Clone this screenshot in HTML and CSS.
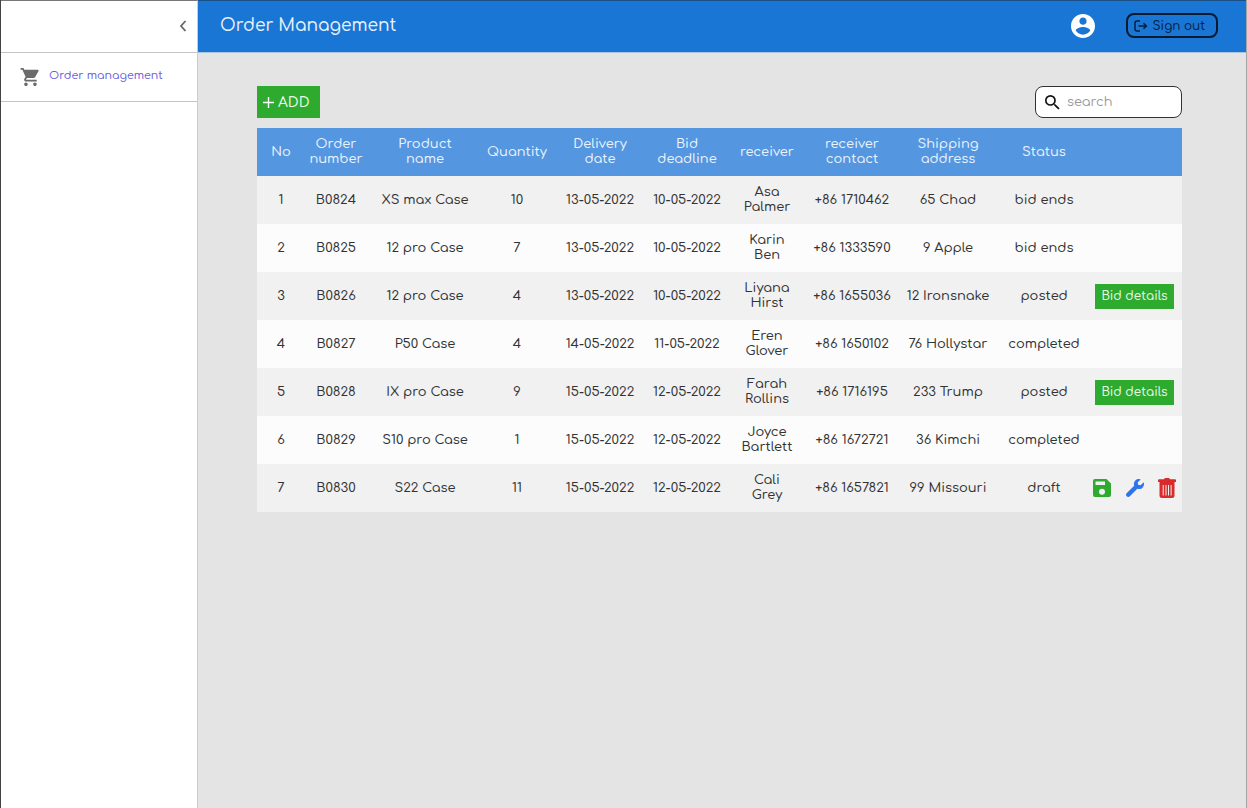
FILE: index.html
```html
<!DOCTYPE html>
<html lang="en">
<head>
<meta charset="utf-8">
<meta name="viewport" content="width=device-width, initial-scale=1">
<title>Order Management</title>
<link rel="stylesheet" href="styles.css">
</head>
<body>
<div class="app">
  <aside class="sidebar">
    <div class="sidebar-top">
      <button class="icon-button" type="button" aria-label="Collapse sidebar">
        <svg class="chevron" viewBox="0 0 8 12"><path d="M6.500 1 2 6l4.500 5" fill="none" stroke="#666" stroke-width="1.800"/></svg>
      </button>
    </div>
    <nav>
      <a class="nav-item" href="#">
        <svg class="cart" viewBox="1 2 21 20"><path fill="#6b6b6b" d="M7 18c-1.100 0-1.990.9-1.990 2S5.900 22 7 22s2-.9 2-2-.9-2-2-2zM1 2v2h2l3.600 7.590-1.350 2.450c-.16.28-.25.61-.25.96 0 1.100.9 2 2 2h12v-2H7.420c-.14 0-.25-.11-.25-.25l.03-.12.9-1.630h7.450c.75 0 1.410-.41 1.750-1.030l3.580-6.490A1 1 0 0 0 20 4H5.210l-.94-2H1zm16 16c-1.100 0-1.990.9-1.990 2s.89 2 1.990 2 2-.9 2-2-.9-2-2-2z"/></svg>
        <span>Order management</span>
      </a>
    </nav>
  </aside>
  <div class="page">
    <header class="topbar">
      <h1>Order Management</h1>
      <div class="account">
        <button class="icon-button" type="button" aria-label="Account">
          <svg class="avatar" viewBox="2 2 20 20"><path fill="#fff" d="M12 2C6.480 2 2 6.480 2 12s4.480 10 10 10 10-4.480 10-10S17.520 2 12 2zm0 3c1.660 0 3 1.340 3 3s-1.340 3-3 3-3-1.340-3-3 1.340-3 3-3zm0 14.200c-2.500 0-4.710-1.280-6-3.220.03-1.990 4-3.080 6-3.080 1.990 0 5.970 1.090 6 3.080-1.290 1.940-3.500 3.220-6 3.220z"/></svg>
        </button>
        <button class="sign-out" type="button">
          <svg class="exit" viewBox="0 0 14 12"><path d="M6 1H3Q1 1 1 3v6q0 2 2 2h3M4.500 6H12M9.500 3.200 12.400 6 9.500 8.800" fill="none" stroke="#08203c" stroke-width="1.500"/></svg>
          <span>Sign out</span>
        </button>
      </div>
    </header>
    <main class="content">
      <div class="toolbar">
        <button class="add" type="button"><svg class="plus" viewBox="0 0 11 11"><path d="M5.500 0v11M0 5.500h11" stroke="#fff" stroke-width="1.400"/></svg>ADD</button>
        <label class="search">
          <svg class="lens" viewBox="3 3 18 18"><path fill="#111" d="M15.500 14h-.79l-.28-.27A6.470 6.470 0 0 0 16 9.500 6.500 6.500 0 1 0 9.500 16c1.610 0 3.090-.59 4.230-1.570l.27.28v.79l5 4.990L20.490 19l-4.990-5zm-6 0C7.010 14 5 11.990 5 9.500S7.010 5 9.500 5 14 7.010 14 9.500 11.990 14 9.500 14z"/></svg>
          <input type="search" placeholder="search" aria-label="Search orders">
        </label>
      </div>
      <table class="orders">
        <colgroup>
          <col class="c-no"><col class="c-order"><col class="c-product"><col class="c-qty"><col class="c-delivery"><col class="c-deadline"><col class="c-receiver"><col class="c-contact"><col class="c-address"><col class="c-status"><col class="c-actions">
        </colgroup>
        <thead>
          <tr><th>No</th><th>Order<br>number</th><th>Product<br>name</th><th>Quantity</th><th>Delivery<br>date</th><th>Bid<br>deadline</th><th>receiver</th><th>receiver<br>contact</th><th>Shipping<br>address</th><th>Status</th><th aria-label="Actions"></th></tr>
        </thead>
        <tbody>
          <tr><td>1</td><td>B0824</td><td>XS max Case</td><td>10</td><td>13-05-2022</td><td>10-05-2022</td><td>Asa<br>Palmer</td><td>+86 1710462</td><td>65 Chad</td><td>bid ends</td><td></td></tr>
          <tr><td>2</td><td>B0825</td><td>12 pro Case</td><td>7</td><td>13-05-2022</td><td>10-05-2022</td><td>Karin<br>Ben</td><td>+86 1333590</td><td>9 Apple</td><td>bid ends</td><td></td></tr>
          <tr><td>3</td><td>B0826</td><td>12 pro Case</td><td>4</td><td>13-05-2022</td><td>10-05-2022</td><td>Liyana<br>Hirst</td><td>+86 1655036</td><td>12 Ironsnake</td><td>posted</td><td><button class="details" type="button">Bid details</button></td></tr>
          <tr><td>4</td><td>B0827</td><td>P50 Case</td><td>4</td><td>14-05-2022</td><td>11-05-2022</td><td>Eren<br>Glover</td><td>+86 1650102</td><td>76 Hollystar</td><td>completed</td><td></td></tr>
          <tr><td>5</td><td>B0828</td><td>IX pro Case</td><td>9</td><td>15-05-2022</td><td>12-05-2022</td><td>Farah<br>Rollins</td><td>+86 1716195</td><td>233 Trump</td><td>posted</td><td><button class="details" type="button">Bid details</button></td></tr>
          <tr><td>6</td><td>B0829</td><td>S10 pro Case</td><td>1</td><td>15-05-2022</td><td>12-05-2022</td><td>Joyce<br>Bartlett</td><td>+86 1672721</td><td>36 Kimchi</td><td>completed</td><td></td></tr>
          <tr><td>7</td><td>B0830</td><td>S22 Case</td><td>11</td><td>15-05-2022</td><td>12-05-2022</td><td>Cali<br>Grey</td><td>+86 1657821</td><td>99 Missouri</td><td>draft</td><td>
            <div class="actions">
              <button class="icon-button" type="button" aria-label="Save">
                <svg class="action" viewBox="0 0 18 18"><path fill="#2eab2e" fill-rule="evenodd" d="M2 0h11.500L18 4.500V16a2 2 0 0 1-2 2H2a2 2 0 0 1-2-2V2a2 2 0 0 1 2-2zm.5 2.500V6h9.500V2.500zM9 9.700a3 3 0 1 0 0 6 3 3 0 0 0 0-6z"/></svg>
              </button>
              <button class="icon-button" type="button" aria-label="Edit">
                <svg class="action" viewBox="0 0 512 512"><path fill="#2f74ee" d="M507.730 109.100c-2.240-9.030-13.540-12.090-20.120-5.510l-74.360 74.360-67.880-11.310-11.310-67.880 74.360-74.360c6.620-6.620 3.430-17.900-5.660-20.160-47.380-11.740-99.550.91-136.580 37.930-39.640 39.640-50.550 97.100-34.050 147.200L18.740 402.760c-24.990 24.990-24.990 65.510 0 90.500 24.990 24.990 65.510 24.990 90.500 0l213.210-213.210c50.120 16.710 107.470 5.680 147.370-34.220 37.070-37.070 49.700-89.320 37.910-136.730z"/></svg>
              </button>
              <button class="icon-button" type="button" aria-label="Delete">
                <svg class="action trash" viewBox="0 0 18 20"><path fill="#d92b2b" fill-rule="evenodd" d="M6 1.200Q6.500 0 7.500 0h3q1 0 1.500 1.200h5q1 0 1 1V4H0V2.200q0-1 1-1zM1.500 4h15v13.500q0 2.500-2.500 2.500H4q-2.500 0-2.500-2.500zM4.700 7v10.500h1V7zm2.800 0v10.500h1V7zm2.500 0v10.500h1V7zm2.600 0v10.500h1V7z"/></svg>
              </button>
            </div>
          </td></tr>
        </tbody>
      </table>
    </main>
  </div>
</div>
</body>
</html>
```
FILE: styles.css
```css
* { box-sizing: border-box; }

body {
  margin: 0;
  font-family: Comfortaa, "Open Sans", sans-serif;
  font-size: 13px;
  font-weight: 500;
  color: #333;
  background: #e4e4e4;
}

button, input { font: inherit; }
button { cursor: pointer; }
svg { display: block; }

.app {
  display: flex;
  min-height: 100vh;
  border-left: 1px solid #444;
}

.sidebar {
  flex: 0 0 197px;
  background: #fff;
  border-top: 1px solid #777;
  border-right: 1px solid #cbcbcb;
}

.sidebar-top {
  display: flex;
  align-items: center;
  justify-content: flex-end;
  height: 52px;
  padding: 0 10px 2px 0;
  border-bottom: 1px solid #c4c4c4;
}

.icon-button {
  padding: 0;
  border: 0;
  background: none;
}

.chevron { width: 8px; height: 12px; }

.nav-item {
  display: flex;
  align-items: center;
  gap: 9px;
  height: 49px;
  padding-left: 19px;
  border-bottom: 1px solid #c4c4c4;
  color: #6a5ed8;
  font-size: 11px;
  line-height: 14px;
  text-decoration: none;
}

.nav-item span { padding-bottom: 2px; }

.cart { width: 20px; height: 18px; }

.page {
  flex: 1;
  min-width: 0;
  border-right: 1px solid #a5a5a5;
}

.topbar {
  display: flex;
  align-items: center;
  justify-content: space-between;
  height: 53px;
  padding: 0 28px 2px 22px;
  border-top: 1px solid #1a4f86;
  border-bottom: 1px solid #a9c4df;
  background: #1a76d4;
}

h1 {
  margin: 0;
  color: #e8f1fb;
  font-size: 17px;
  font-weight: 500;
  line-height: 24px;
}

.account {
  display: flex;
  align-items: center;
  gap: 31px;
}

.avatar { width: 24px; height: 24px; }

.sign-out {
  display: flex;
  align-items: center;
  gap: 5px;
  height: 25px;
  padding: 0 11px 0 6px;
  border: 2px solid #061a30;
  border-radius: 8px;
  background: none;
  color: #08203c;
  font-size: 12px;
}

.exit { width: 14px; height: 12px; }

.content { padding: 33px 64px 33px 59px; }

.toolbar {
  display: flex;
  justify-content: space-between;
  margin-bottom: 10px;
}

.add {
  display: flex;
  align-items: center;
  gap: 4px;
  height: 32px;
  padding: 0 10px 0 6px;
  border: 0;
  background: #2eab2e;
  color: #e9f8e9;
  font-size: 14px;
}

.plus { width: 11px; height: 11px; }

.search {
  display: flex;
  align-items: center;
  gap: 7px;
  width: 147px;
  height: 32px;
  padding: 0 9px;
  border: 1px solid #333;
  border-radius: 8px;
  background: #fff;
}

.lens { flex: none; width: 15px; height: 15px; }

.search input {
  width: 100%;
  min-width: 0;
  padding: 0;
  border: 0;
  outline: 0;
  background: none;
  font-weight: 400;
}

.search input::placeholder { color: #999; }

.orders {
  width: 100%;
  border-collapse: collapse;
  table-layout: fixed;
  line-height: 15px;
  text-align: center;
}

.c-no { width: 48px; }
.c-order { width: 62px; }
.c-product { width: 116px; }
.c-qty { width: 68px; }
.c-delivery { width: 98px; }
.c-deadline { width: 76px; }
.c-receiver { width: 84px; }
.c-contact { width: 86px; }
.c-address { width: 106px; }
.c-status { width: 86px; }
.c-actions { width: 95px; }

.orders th,
.orders td {
  height: 48px;
  padding: 0;
  white-space: nowrap;
}

.orders th {
  background: #5596e0;
  color: #eaf2fc;
  font-weight: 500;
}

.orders tbody tr { background: #fcfcfc; }
.orders tbody tr:nth-child(odd) { background: #f1f1f1; }

.details {
  width: 79px;
  height: 25px;
  padding: 0;
  border: 0;
  background: #2eab2e;
  color: #e9f8e9;
  font-size: 12px;
}

.actions {
  display: flex;
  align-items: center;
  justify-content: space-between;
  padding: 0 6px;
}

.action { width: 18px; height: 18px; }
.trash { height: 20px; }
```
